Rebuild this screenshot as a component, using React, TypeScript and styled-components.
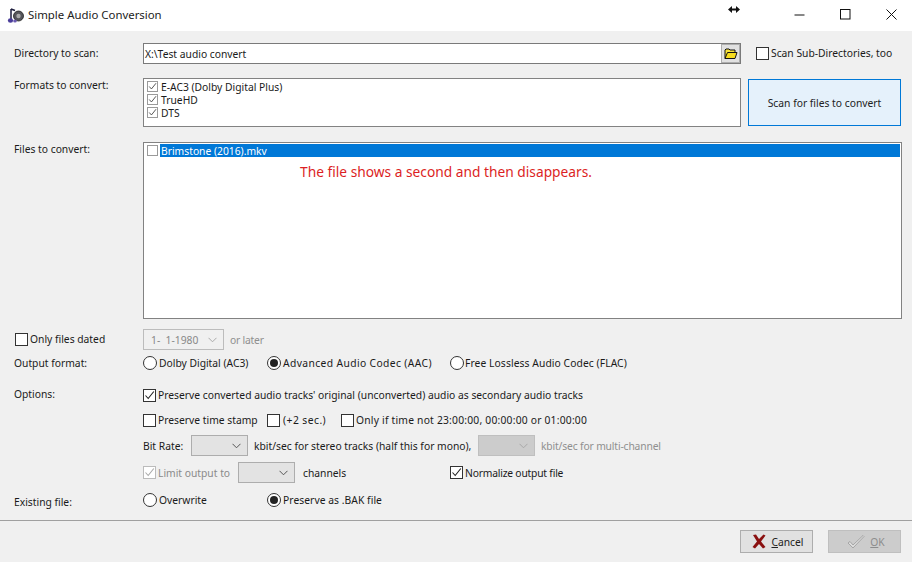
import React from "react";
import styled, { createGlobalStyle } from "styled-components";

const Global = createGlobalStyle`
  html, body { margin: 0; padding: 0; background: #f0f0f0; }
  body { font-family: "Noto Sans", "Open Sans", sans-serif; font-size: 10.3px; color: #1a1a1a; }
`;

const Win = styled.div`
  position: relative; width: 912px; height: 562px; overflow: hidden;
  display: flex; flex-direction: column; background: #f0f0f0;
`;
const TitleBar = styled.div`
  height: 31px; flex: none; background: #fff; display: flex; align-items: center;
  padding: 0 0 0 7px; box-sizing: border-box;
`;
const TitleText = styled.span`
  font-size: 11.4px; margin-left: 4px; flex: 1; color: #222; position: relative; top: -1px;
`;
const WinBtn = styled.div`
  width: 46px; height: 29px; align-self: flex-start; box-sizing: border-box; padding-left: 4px;
  display: flex; align-items: center; justify-content: center;
`;
const ResizeCursor = styled.svg`
  position: absolute; left: 728px; top: 5px;
`;
const Content = styled.div`
  flex: 1; display: flex; flex-direction: column; padding-top: 12px;
`;
const Row = styled.div<{ $h: number; $mt?: number }>`
  display: grid; grid-template-columns: 143px 1fr; height: ${p => p.$h}px;
  margin-top: ${p => p.$mt ?? 0}px; align-items: start;
`;
const Label = styled.div<{ $top?: number }>`
  padding-left: 14px; line-height: 16px; white-space: nowrap;
  margin-top: ${p => p.$top ?? 0}px;
`;
const Line = styled.div`
  display: flex; align-items: center; height: 100%; white-space: nowrap;
`;
const TopLine = styled.div`
  display: flex; align-items: flex-start;
`;
const PathField = styled.div`
  width: 598px; height: 21px; box-sizing: border-box; background: #fff; border: 1px solid #7a7a7a;
  display: flex; align-items: center; justify-content: space-between; padding-left: 1px;
`;
const BrowseBtn = styled.div`
  width: 19px; height: 19px; box-sizing: border-box; background: #e1e1e1; border: 1px solid #adadad;
  display: flex; align-items: center; justify-content: center;
`;
const ListBox = styled.div<{ $w: number; $h: number }>`
  width: ${p => p.$w}px; height: ${p => p.$h}px; box-sizing: border-box; background: #fff;
  border: 1px solid #828282; padding: 1px; display: flex; flex-direction: column;
`;
const ListRow = styled.div`
  height: 13px; display: flex; align-items: center; line-height: 14px; white-space: nowrap;
`;
const ListCheck = styled.span`
  width: 11px; height: 11px; box-sizing: border-box; border: 1px solid #9a9a9a; background: #fff;
  margin: 0 2px 0 2px; flex: none; display: flex; align-items: center; justify-content: center;
`;
const ListText = styled.span<{ $sel?: boolean }>`
  flex: ${p => (p.$sel ? 1 : "none")}; background: ${p => (p.$sel ? "#0078d7" : "transparent")};
  color: ${p => (p.$sel ? "#fff" : "inherit")}; padding: 1px 0 0 1px; height: 13px; box-sizing: border-box;
  line-height: 13px;
`;
const Note = styled.div`
  color: #dc1f24; font-size: 13.76px; line-height: 20px; margin: 5px 0 0 155px; white-space: nowrap;
`;
const ScanBtn = styled.div`
  width: 153px; height: 47px; box-sizing: border-box; margin: 1px 0 0 7px; background: #e5f1fb;
  border: 1px solid #0078d7; display: flex; align-items: center; justify-content: center;
  color: #222;
`;
const Box = styled.span<{ $off?: boolean }>`
  width: 13px; height: 13px; box-sizing: border-box; border: 1px solid ${p => (p.$off ? "#bbb" : "#333")};
  background: #fff; flex: none; display: flex; align-items: center; justify-content: center;
`;
const Radio = styled.span<{ $on?: boolean }>`
  width: 14px; height: 14px; box-sizing: border-box; border: 1px solid #333; border-radius: 50%;
  background: #fff; flex: none; display: flex; align-items: center; justify-content: center;
  &::after {
    content: ""; display: ${p => (p.$on ? "block" : "none")}; width: 8px; height: 8px;
    border-radius: 50%; background: #222;
  }
`;
const Opt = styled.span<{ $w?: number; $off?: boolean; $ls?: number; $gap?: number }>`
  display: inline-flex; align-items: center; gap: ${p => p.$gap ?? 2}px; flex: none;
  width: ${p => (p.$w ? `${p.$w}px` : "auto")}; color: ${p => (p.$off ? "#8a8a8a" : "inherit")};
  letter-spacing: ${p => p.$ls ?? 0}px;
`;
const SubDirOpt = styled(Opt)`
  margin: 4px 0 0 15px; position: relative; top: -1px;
`;
const DatedOpt = styled(Opt)`
  margin-left: 1px;
`;
const Dim = styled.span<{ $ml?: number; $ls?: number }>`
  color: #8f8f8f; margin-left: ${p => p.$ml ?? 0}px; letter-spacing: ${p => p.$ls ?? 0}px;
`;
const Txt = styled.span<{ $ml?: number; $w?: number }>`
  margin-left: ${p => p.$ml ?? 0}px; ${p => (p.$w ? `width: ${p.$w}px;` : "")}
`;
const Select = styled.div<{ $w: number; $bg?: string; $ml?: number; $ink?: string }>`
  width: ${p => p.$w}px; height: 21px; box-sizing: border-box; flex: none; white-space: pre;
  margin-left: ${p => p.$ml ?? 0}px; background: ${p => p.$bg ?? "#e3e3e3"};
  border: 1px solid ${p => p.$ink ?? "#adadad"}; display: flex; align-items: center;
  justify-content: space-between; padding: 0 6px 0 7px; color: #888;
`;
const Footer = styled.div`
  height: 32px; flex: none; border-top: 1px solid #a0a0a0;
  display: flex; justify-content: flex-end; gap: 15px; padding: 9px 11px 0 0; margin-top: auto;
`;
const DlgBtn = styled.div<{ $off?: boolean }>`
  width: 73px; height: 23px; box-sizing: border-box; display: flex; align-items: center; justify-content: center; gap: 5px;
  padding-left: 3px;
  background: ${p => (p.$off ? "#cccccc" : "#e1e1e1")}; border: 1px solid ${p => (p.$off ? "#bfbfbf" : "#adadad")};
  color: ${p => (p.$off ? "#8c8c8c" : "#222")};
  u { text-underline-offset: 1px; }
`;

const Check = ({ c = "#222" }: { c?: string }) => (
  <svg width="11" height="11" viewBox="0 0 11 11"><path d="M1.5 5.5 L4.2 8.5 L9.8 1.5" fill="none" stroke={c} strokeWidth="1.1" /></svg>
);
const Chev = ({ c = "#555" }: { c?: string }) => (
  <svg width="9" height="6" viewBox="0 0 9 6"><path d="M0.5 0.8 L4.5 4.8 L8.5 0.8" fill="none" stroke={c} strokeWidth="1" /></svg>
);

const App = () => (
  <Win>
    <Global />
    <TitleBar>
      <svg width="17" height="17" viewBox="0 0 17 17">
        <circle cx="11.5" cy="9" r="5" fill="#55555a" stroke="#1f1f1f" strokeWidth="0.8" />
        <circle cx="11.5" cy="9" r="2.2" fill="#a9a9a9" />
        <path d="M4 13 V2 M4 2 L8 3.5" fill="none" stroke="#1c1c3c" strokeWidth="1.5" />
        <ellipse cx="3.5" cy="13.5" rx="2.6" ry="2.2" fill="#4a3d9a" />
        <ellipse cx="8" cy="14" rx="1.8" ry="1.5" fill="#6a5ab0" />
      </svg>
      <TitleText>Simple Audio Conversion</TitleText>
      <WinBtn>
        <svg width="11" height="11" viewBox="0 0 11 11"><path d="M0.5 6 H10.5" stroke="#111" /></svg>
      </WinBtn>
      <WinBtn>
        <svg width="11" height="11" viewBox="0 0 11 11"><rect x="0.5" y="0.5" width="9.5" height="9.5" fill="none" stroke="#111" /></svg>
      </WinBtn>
      <WinBtn>
        <svg width="11" height="11" viewBox="0 0 11 11"><path d="M0.5 0.5 L10.5 10.5 M10.5 0.5 L0.5 10.5" stroke="#111" /></svg>
      </WinBtn>
    </TitleBar>
    <ResizeCursor width="12" height="9" viewBox="0 0 12 9">
      <path d="M0 4.5 L4 1 V3.5 H8 V1 L12 4.5 L8 8 V5.5 H4 V8 Z" fill="#111" />
    </ResizeCursor>
    <Content>
      <Row $h={21}>
        <Label $top={2}>Directory to scan:</Label>
        <TopLine>
          <PathField>
            X:\Test audio convert
            <BrowseBtn>
              <svg width="14" height="13" viewBox="0 0 14 13">
                <path d="M1 11.5 V3 L2 2 H5 L6 3 H11 V5" fill="#f7e23c" stroke="#111" strokeWidth="1" />
                <path d="M1 11.5 L3.5 5.5 H13 L11 11.5 Z" fill="#f6dc1e" stroke="#111" strokeWidth="1" />
              </svg>
            </BrowseBtn>
          </PathField>
          <SubDirOpt><Box />Scan Sub-Directories, too</SubDirOpt>
        </TopLine>
      </Row>
      <Row $h={49} $mt={14}>
        <Label $top={-1}>Formats to convert:</Label>
        <TopLine>
          <ListBox $w={598} $h={49}>
            {["E-AC3 (Dolby Digital Plus)", "TrueHD", "DTS"].map(t => (
              <ListRow key={t}>
                <ListCheck><Check c="#444" /></ListCheck>
                <ListText>{t}</ListText>
              </ListRow>
            ))}
          </ListBox>
          <ScanBtn>Scan for files to convert</ScanBtn>
        </TopLine>
      </Row>
      <Row $h={177} $mt={15}>
        <Label $top={-1}>Files to convert:</Label>
        <ListBox $w={759} $h={177}>
          <ListRow>
            <ListCheck />
            <ListText $sel>Brimstone (2016).mkv</ListText>
          </ListRow>
          <Note>The file shows a second and then disappears.</Note>
        </ListBox>
      </Row>
      <Row $h={21} $mt={10}>
        <Label $top={2}>
          <DatedOpt><Box />Only files dated</DatedOpt>
        </Label>
        <Line>
          <Select $w={81} $bg="#f0f0f0" $ink="#bcbcbc"><span>1-  1-1980</span><Chev c="#aaa" /></Select>
          <Dim $ml={6} $ls={-0.2}>or later</Dim>
        </Line>
      </Row>
      <Row $h={20} $mt={3}>
        <Label $top={2}>Output format:</Label>
        <Line>
          <Opt $w={124}><Radio />Dolby Digital (AC3)</Opt>
          <Opt $w={183} $ls={0.38}><Radio $on />Advanced Audio Codec (AAC)</Opt>
          <Opt $ls={0.08} $gap={1}><Radio />Free Lossless Audio Codec (FLAC)</Opt>
        </Line>
      </Row>
      <Row $h={20} $mt={12}>
        <Label $top={1}>Options:</Label>
        <Line>
          <Opt><Box><Check /></Box>Preserve converted audio tracks' original (unconverted) audio as secondary audio tracks</Opt>
        </Line>
      </Row>
      <Row $h={20} $mt={5}>
        <span />
        <Line>
          <Opt $w={124}><Box />Preserve time stamp</Opt>
          <Opt $w={74} $ls={0.45} $gap={3}><Box />(+2 sec.)</Opt>
          <Opt $ls={0.21}><Box />Only if time not 23:00:00, 00:00:00 or 01:00:00</Opt>
        </Line>
      </Row>
      <Row $h={21} $mt={5}>
        <span />
        <Line>
          <Txt $w={48}>Bit Rate:</Txt>
          <Select $w={57}><span /><Chev /></Select>
          <Txt $ml={6} $w={224}>kbit/sec for stereo tracks (half this for mono),</Txt>
          <Select $w={57} $bg="#cccccc" $ink="#bfbfbf"><span /><Chev c="#a8a8a8" /></Select>
          <Dim $ml={6} $ls={-0.15}>kbit/sec for multi-channel</Dim>
        </Line>
      </Row>
      <Row $h={21} $mt={6}>
        <span />
        <Line>
          <Opt $w={95} $off><Box $off><Check c="#aaa" /></Box>Limit output to</Opt>
          <Select $w={57}><span /><Chev /></Select>
          <Txt $ml={8} $w={147}>channels</Txt>
          <Opt $ls={-0.2}><Box><Check /></Box>Normalize output file</Opt>
        </Line>
      </Row>
      <Row $h={20} $mt={7}>
        <Label $top={4}>Existing file:</Label>
        <Line>
          <Opt $w={124}><Radio />Overwrite</Opt>
          <Opt $ls={0.05}><Radio $on />Preserve as .BAK file</Opt>
        </Line>
      </Row>
      <Footer>
        <DlgBtn>
          <svg width="14" height="15" viewBox="0 0 14 15">
            <path d="M1 1 L4 0.5 L7 5 L11.5 0.5 L13.5 1.5 L9 7.5 L13.5 13 L11 14.5 L7 10 L3 14.5 L0.5 13 L5 7.5 Z" fill="#8a1010" />
          </svg>
          <span><u>C</u>ancel</span>
        </DlgBtn>
        <DlgBtn $off>
          <svg width="18" height="15" viewBox="0 0 18 15">
            <path d="M1 9 L3 7.5 L6 11 L16 1.5 L17 2.5 L6 14 Z" fill="#ddd" stroke="#999" strokeWidth="0.8" />
          </svg>
          <span><u>O</u>K</span>
        </DlgBtn>
      </Footer>
    </Content>
  </Win>
);

export default App;
